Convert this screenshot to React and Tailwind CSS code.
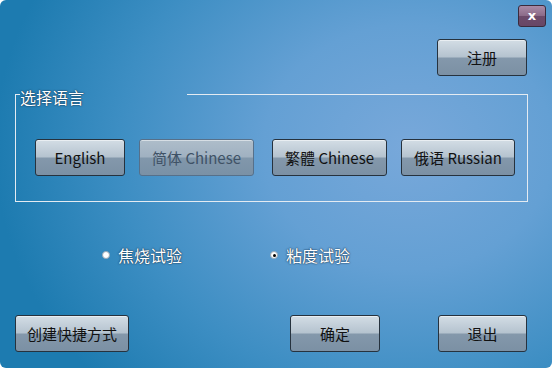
const font = "font-['Noto_Sans_CJK_SC','Noto_Sans',sans-serif]";

const Btn = ({ children, className = '', disabled }) => (
  <button
    className={`flex items-center justify-center h-[37px] rounded-[3px] border text-[15px] leading-none ${
      disabled
        ? 'border-[#56708a] text-[#3f5266] bg-[linear-gradient(#aebdca,#a0b1c1_48%,#8197ab_52%,#7a91a6)]'
        : 'border-[#26323e] text-[#111] bg-[linear-gradient(#d3dde5,#b5c3cf_48%,#8498ab_52%,#7b90a4)]'
    } shadow-[inset_0_1px_0_rgba(255,255,255,0.5)] ${className}`}
  >
    {children}
  </button>
);

const Radio = ({ checked, label }) => (
  <div className="flex items-center">
    <span className="w-[8px] h-[8px] rounded-full bg-white border border-[#9aa8b4] flex items-center justify-center">
      {checked && <span className="w-[3px] h-[3px] rounded-full bg-black" />}
    </span>
    <span className="ml-[8px] text-white text-[16px] leading-[20px] [text-shadow:0_0_2px_#1a3550,0_0_1px_#1a3550]">
      {label}
    </span>
  </div>
);

export default function App() {
  return (
    <div className={`w-[554px] h-[371px] bg-white ${font}`}>
      <div className="w-[552px] h-[368px] rounded-[6px] overflow-hidden flex flex-col bg-[radial-gradient(ellipse_75%_95%_at_74%_40%,#78a8da_0%,#64a0d4_35%,#3d8ec3_70%,#1d7bb0_100%)]">
        {/* title bar */}
        <div className="flex justify-end pt-[5px] pr-[6px]">
          <button className="w-[28px] h-[22px] rounded-[3px] border border-[#3b2b3c] bg-[linear-gradient(#a98ba6,#8c6c89_48%,#6c4b6a_52%,#684766)] text-white text-[13px] font-bold leading-none flex items-center justify-center pb-[2px] font-['DejaVu_Sans',sans-serif]">
            x
          </button>
        </div>

        <div className="flex justify-end mt-[12px] mr-[25px]">
          <Btn className="w-[90px]">注册</Btn>
        </div>

        {/* language group */}
        <div className="mt-[18px] ml-[15px] mr-[24px] h-[108px] border-x border-b border-[#e4ebf2] flex flex-col">
          <div className="flex h-px">
            <div className="w-[4px] bg-[#e4ebf2]" />
            <div className="w-[167px] h-px">
              <div className="-mt-[7px] text-white text-[16px] leading-[20px] [text-shadow:0_0_2px_#1a3550,0_0_1px_#1a3550]">
                选择语言
              </div>
            </div>
            <div className="flex-1 bg-[#e4ebf2]" />
          </div>
          <div className="flex mt-[44px] ml-[19px]">
            <Btn className="w-[90px]">English</Btn>
            <Btn className="w-[115px] ml-[14px]" disabled>简体 Chinese</Btn>
            <Btn className="w-[115px] ml-[18px]">繁體 Chinese</Btn>
            <Btn className="w-[114px] ml-[14px]">俄语 Russian</Btn>
          </div>
        </div>

        {/* test type */}
        <div className="flex mt-[43px] ml-[102px]">
          <Radio label="焦烧试验" />
          <div className="ml-[88px]">
            <Radio checked label="粘度试验" />
          </div>
        </div>

        {/* actions */}
        <div className="flex mt-[50px] ml-[15px]">
          <Btn className="w-[114px]">创建快捷方式</Btn>
          <Btn className="w-[90px] ml-[161px]">确定</Btn>
          <Btn className="w-[89px] ml-[58px]">退出</Btn>
        </div>
      </div>
    </div>
  );
}
